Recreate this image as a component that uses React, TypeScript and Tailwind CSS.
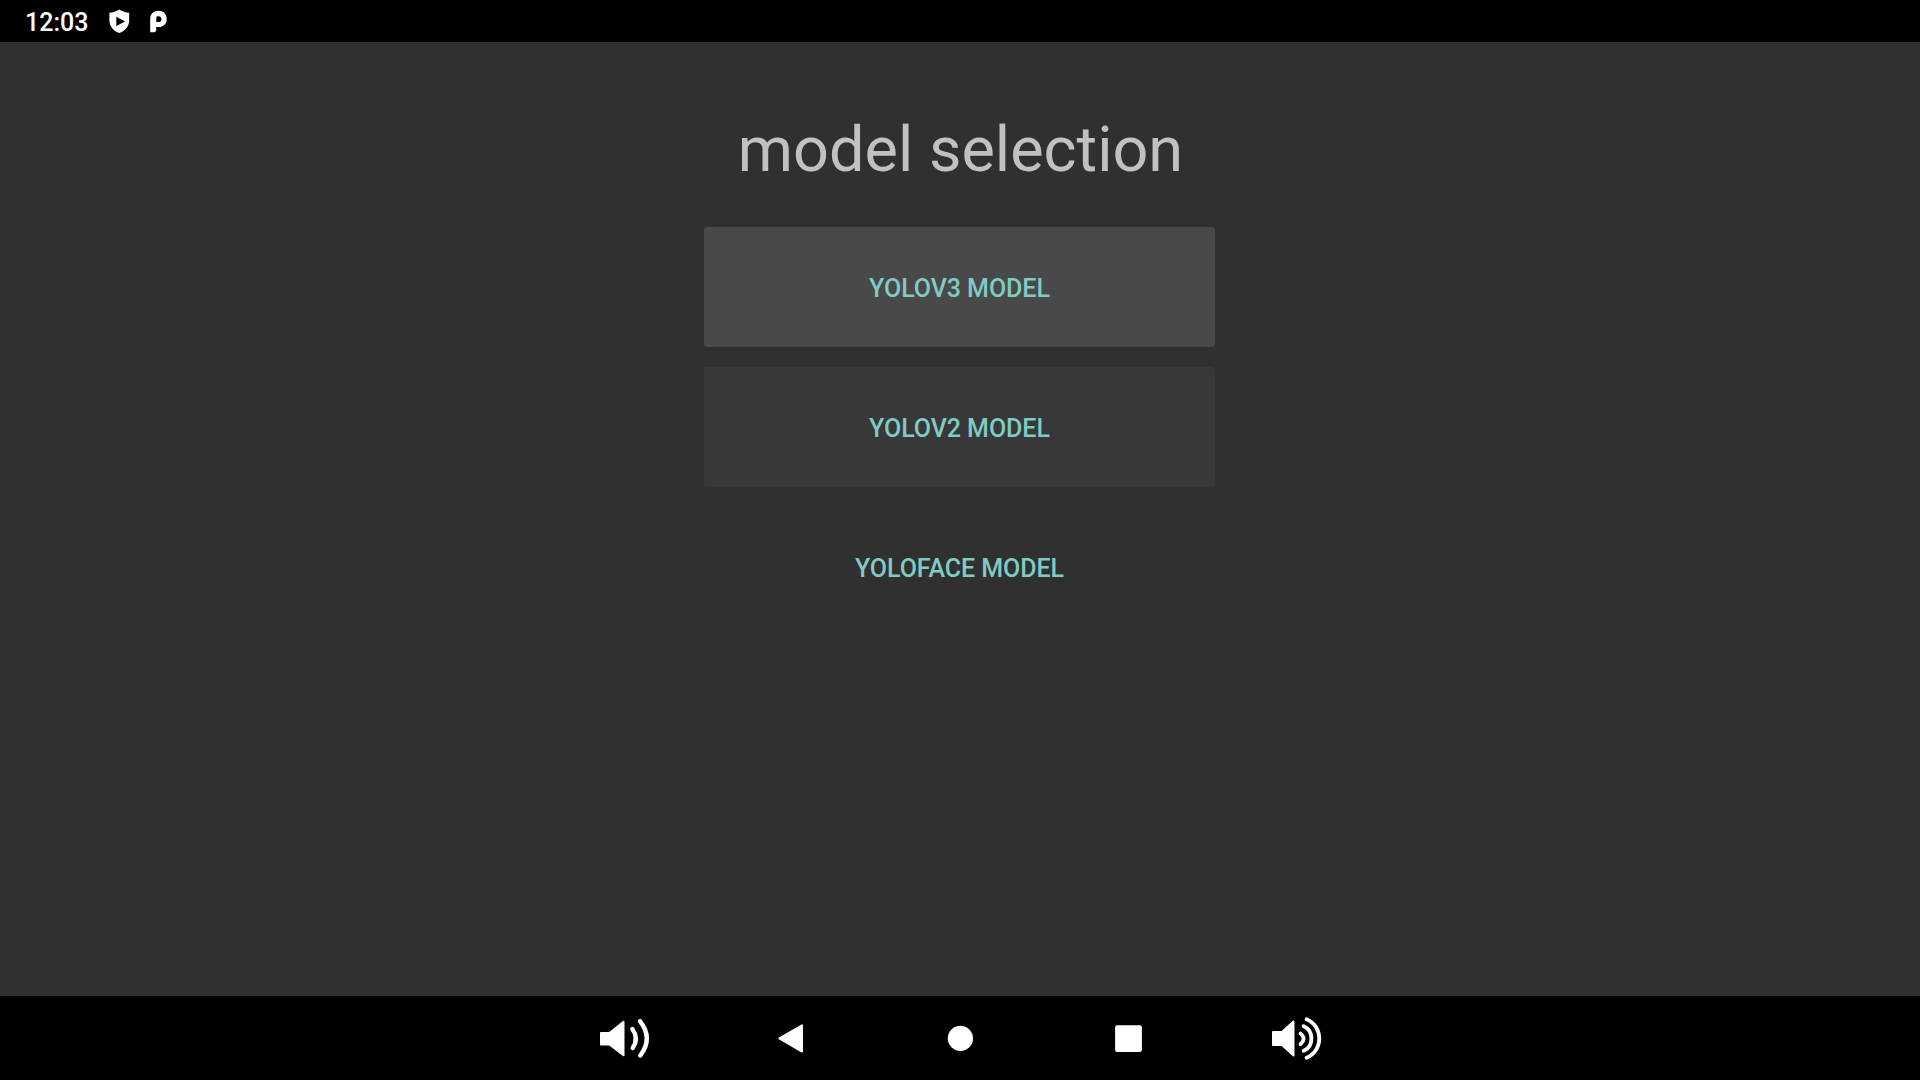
import type { ReactNode } from 'react';

function StatusBar() {
  return (
    <header className="flex h-[42px] shrink-0 items-center bg-black pl-[25px] text-white">
      <span className="h-[42px] w-[84px] pt-[2px] text-[25px] leading-[42px] font-medium">12:03</span>
      <svg className="h-[42px] w-[22px]" viewBox="109 0 22 42" fill="currentColor">
        <path fillRule="evenodd" d="M119.3 9.4C116.4 11.5 113 12.4 109.4 12.7V21C109.6 26.5 114 31.5 119.3 33C124.6 31.5 129 26.5 129.2 21V12.7C125.6 12.4 122.2 11.5 119.3 9.4ZM116.3 16.8V26L125 21.4Z" />
      </svg>
      <svg className="ml-[18px] h-[42px] w-5" viewBox="149 0 20 42" fill="currentColor">
        <path fillRule="evenodd" d="M150.2 32.3V18.9C150.2 13.9 153.5 10.8 158.4 10.8C163.4 10.8 166.7 14 166.7 18.9C166.7 23.7 163.4 27 158.8 27H156.2V30.4L155 32.3ZM156.3 17.6V22.1H158.5C160.4 22.1 161.5 20.9 161.5 19.2C161.5 17.4 160.4 16.3 158.6 16.3C157.2 16.3 156.3 16.8 156.3 17.6Z" />
      </svg>
    </header>
  );
}

function ModelButton({ label, tone }: { label: string; tone: string }) {
  return (
    <button className={`flex h-[120px] w-[511px] items-center justify-center rounded-[3px] pt-[3px] text-[25px] font-medium tracking-[-0.05px] text-[#80cbc4] ${tone}`}>
      {label}
    </button>
  );
}

function NavButton({ label, children }: { label: string; children: ReactNode }) {
  return (
    <button aria-label={label} className="flex h-[84px] w-[84px] items-center justify-center">
      <svg className="size-[84px]" viewBox="0 0 84 84" fill="white" stroke="white" strokeWidth="0" strokeLinecap="round" strokeLinejoin="round">
        {children}
      </svg>
    </button>
  );
}

export default function App() {
  return (
    <div className="flex h-screen w-full flex-col overflow-hidden bg-[#303030] font-[Roboto,sans-serif]">
      <StatusBar />
      <main className="flex flex-1 flex-col items-center pt-[70px]">
        <h1 className="pl-px text-[63px] leading-[76px] text-[#c1c1c1]">model selection</h1>
        <div className="mt-[39px] flex flex-col gap-5 pr-px">
          <ModelButton label="YOLOV3 MODEL" tone="bg-[#494949]" />
          <ModelButton label="YOLOV2 MODEL" tone="bg-[#383838]" />
          <ModelButton label="YOLOFACE MODEL" tone="bg-transparent" />
        </div>
      </main>
      <nav className="flex h-[84px] shrink-0 items-center justify-center gap-[84px] bg-black">
        <NavButton label="Volume down">
          <path strokeWidth="2" d="M19 37H27.5L41.5 25.8V59.2L27.5 48.4H19Z" />
          <path fill="none" strokeWidth="4.4" d="M50.4 33Q57.2 42.5 50.7 52" />
          <path fill="none" strokeWidth="4.4" d="M58 25.2Q71.5 42.5 58.3 59.5" />
        </NavButton>
        <NavButton label="Back">
          <path strokeWidth="2" d="M29.3 42.3L52 29.4V55.6Z" />
        </NavButton>
        <NavButton label="Home">
          <circle cx="42.4" cy="42.4" r="12.6" />
        </NavButton>
        <NavButton label="Recents">
          <rect x="29.1" y="29.2" width="26.8" height="26.8" rx="2" />
        </NavButton>
        <NavButton label="Volume up">
          <path strokeWidth="2" d="M19 36H28L39.5 25.6V59.5L28 49H19Z" />
          <path fill="none" strokeWidth="3.8" d="M46.6 37.6Q52.6 42.5 46.6 48.2" />
          <path fill="none" strokeWidth="3.8" d="M49.6 30.2C60 34.5 60 50.5 49.8 54.8" />
          <path fill="none" strokeWidth="3.8" d="M52.6 23.2C69.5 30.5 69.5 54.8 52.6 61.8" />
        </NavButton>
      </nav>
    </div>
  );
}
